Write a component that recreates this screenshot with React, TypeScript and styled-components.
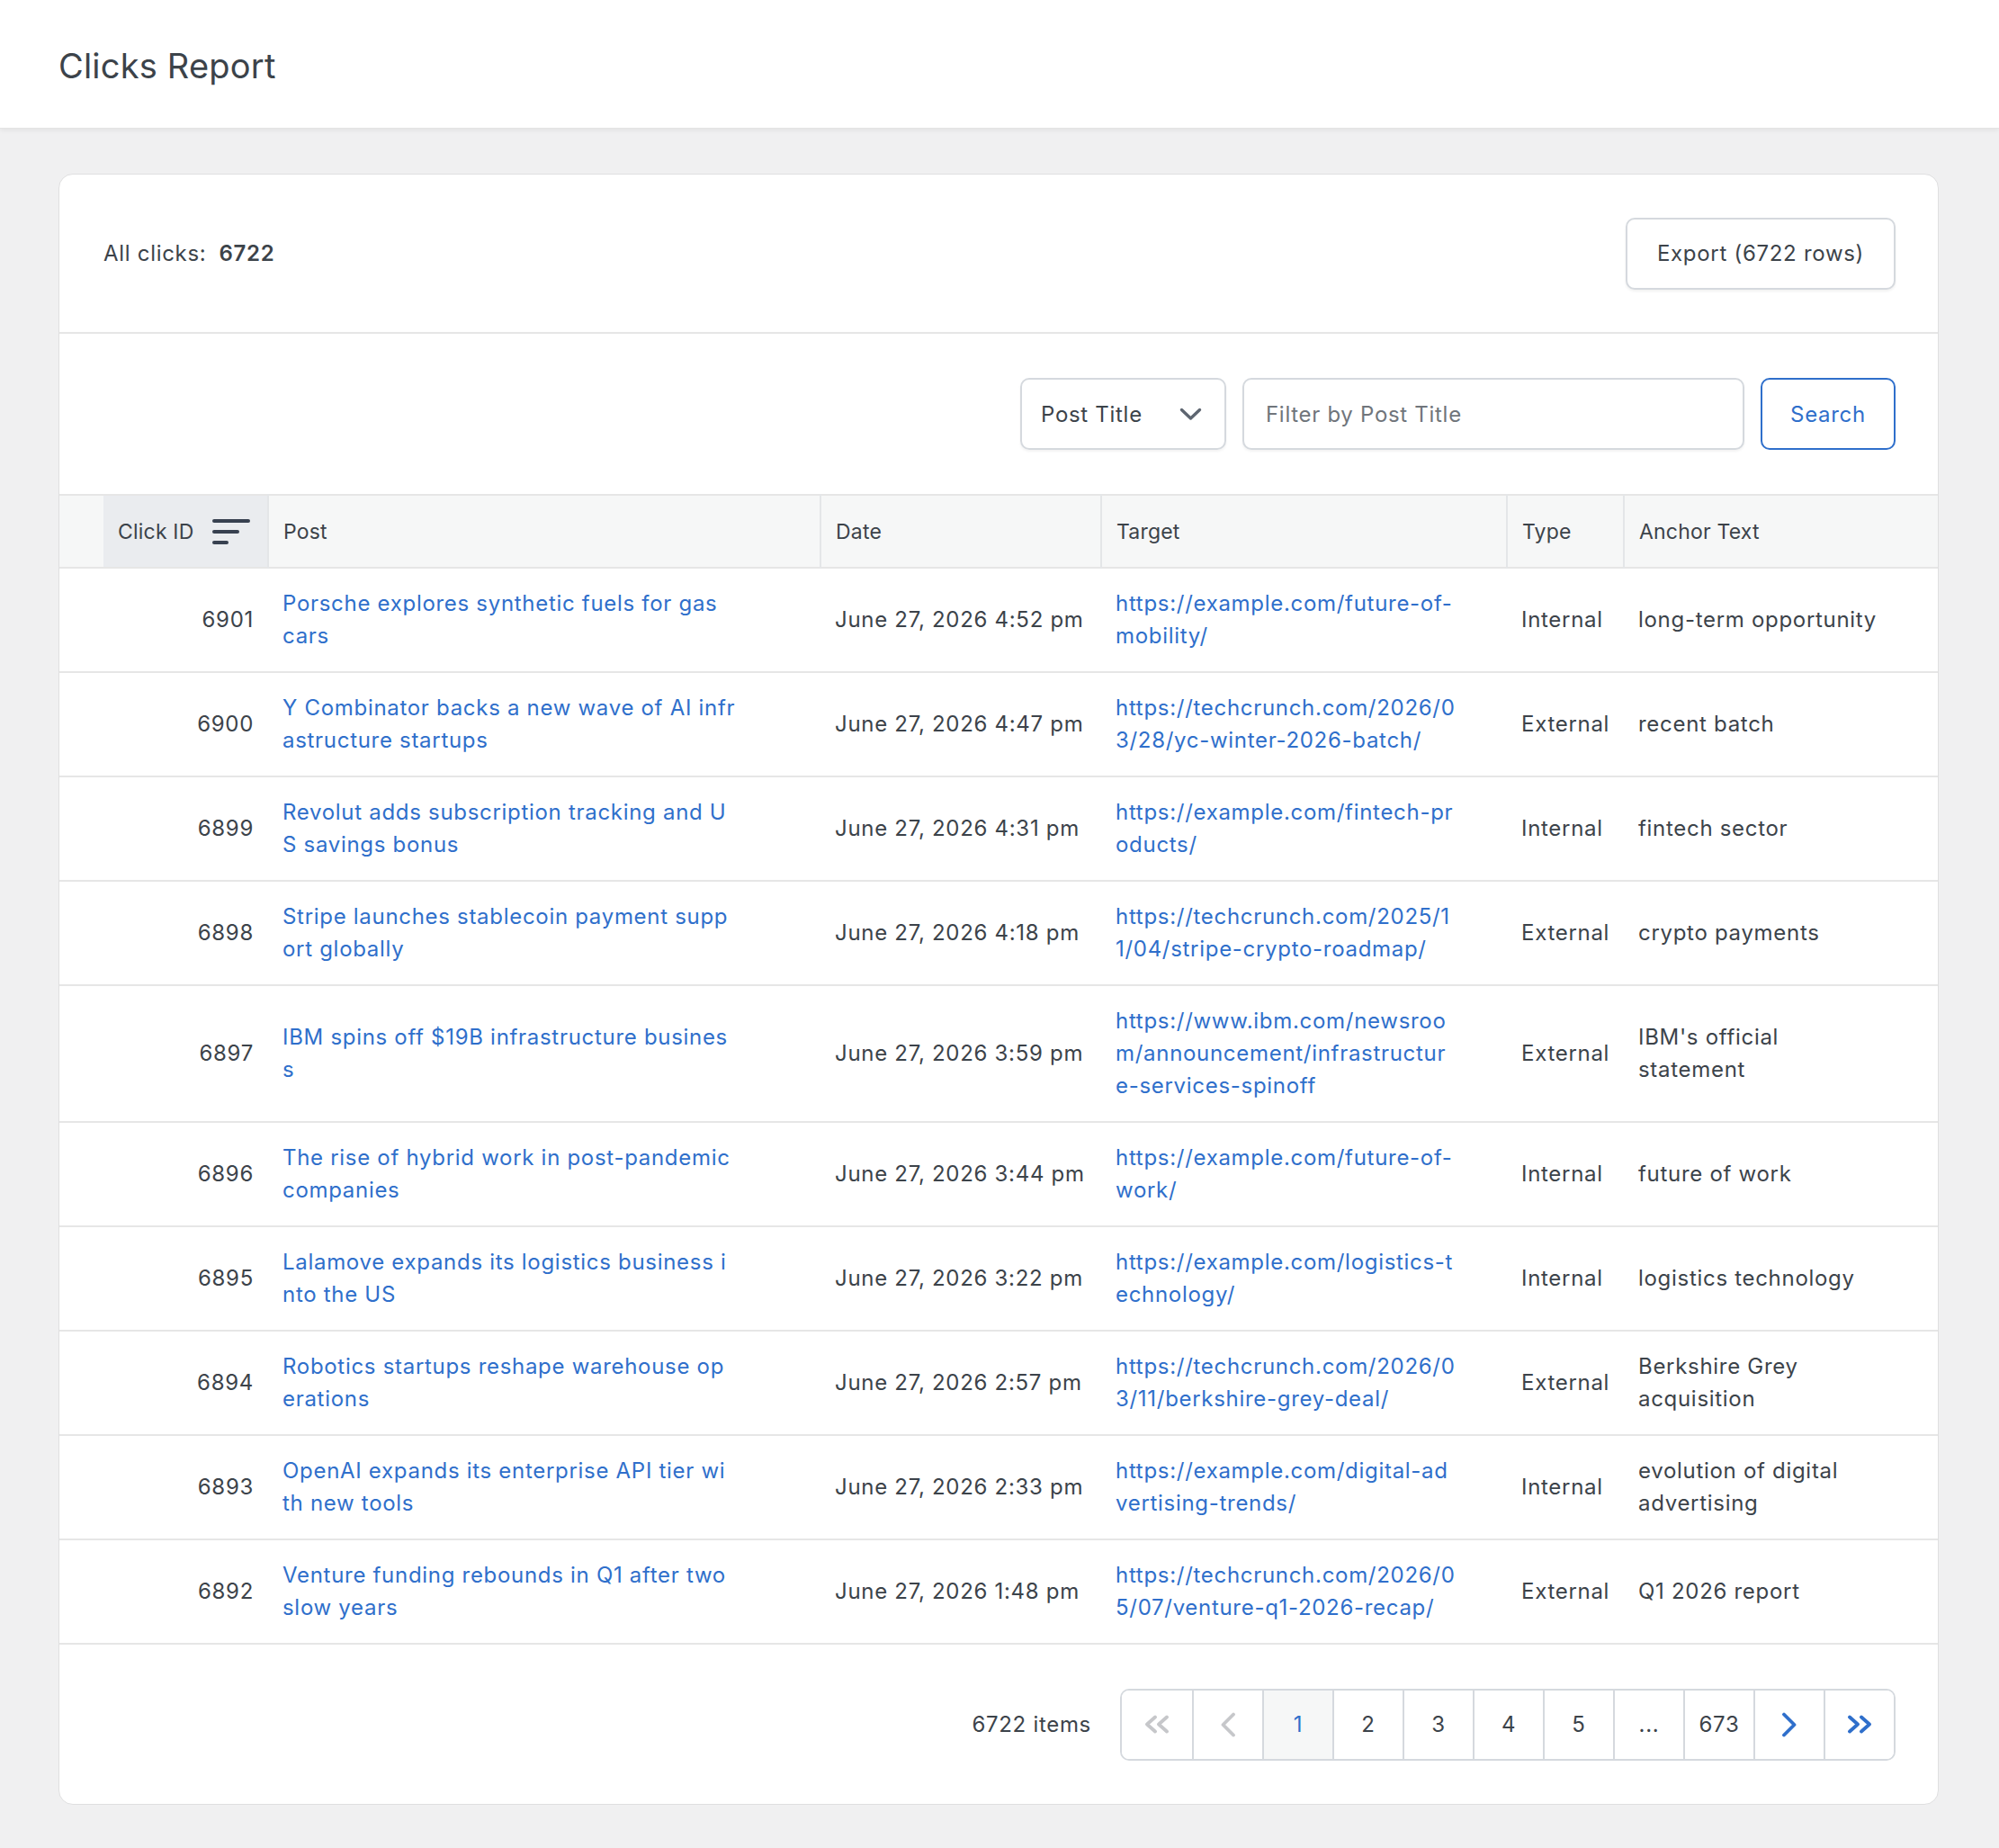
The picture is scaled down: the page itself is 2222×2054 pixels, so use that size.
import styled, { createGlobalStyle } from "styled-components";

const GlobalStyle = createGlobalStyle`
  * { box-sizing: border-box; }
  body {
    margin: 0;
    background: #f0f0f1;
    font-family: Inter, "Liberation Sans", sans-serif;
    font-size: 24px;
    letter-spacing: 0.7px;
    color: #3c434a;
  }
`;

const TopBar = styled.header`
  height: 143px;
  background: #fff;
  display: flex;
  align-items: center;
  padding-left: 65px;
  box-shadow: 0 2px 5px rgba(0, 0, 0, 0.06);
  border-bottom: 1px solid #e4e4e4;
`;

const Title = styled.h1`
  margin: 0 0 -3px;
  font-size: 38px;
  font-weight: 400;
  letter-spacing: 0.2px;
  color: #3c434a;
`;

const Main = styled.main`
  padding: 50px 67px 50px 65px;
`;

const Card = styled.section`
  background: #fff;
  border: 1px solid #dfdfe0;
  border-radius: 16px;
  overflow: hidden;
`;

const SummaryBar = styled.div`
  height: 177px;
  display: flex;
  align-items: center;
  justify-content: space-between;
  padding: 0 47px 0 49px;
  border-bottom: 2px solid #e6e6e6;
`;

const Count = styled.strong`
  font-weight: 600;
  margin-left: 14px;
`;

const Button = styled.button<{ $primary?: boolean; $w: number }>`
  width: ${(p) => p.$w}px;
  height: 80px;
  border-radius: 10px;
  background: #fff;
  font-family: inherit;
  font-size: 24px;
  letter-spacing: inherit;
  cursor: pointer;
  border: 2px solid ${(p) => (p.$primary ? "#2f6fcb" : "#d5d9de")};
  color: ${(p) => (p.$primary ? "#2f6fcb" : "#3c434a")};
  box-shadow: ${(p) => (p.$primary ? "none" : "0 2px 3px rgba(0,0,0,0.06)")};
`;

const FilterBar = styled.div`
  height: 178px;
  display: flex;
  align-items: center;
  justify-content: flex-end;
  gap: 18px;
  padding: 0 47px;
`;

const SelectBox = styled.div`
  width: 229px;
  height: 80px;
  border: 2px solid #d5d9de;
  border-radius: 10px;
  display: flex;
  align-items: center;
  justify-content: space-between;
  padding: 0 25px 0 21px;
  box-shadow: 0 2px 3px rgba(0, 0, 0, 0.05);
`;

const Input = styled.input`
  width: 558px;
  height: 80px;
  border: 2px solid #d5d9de;
  border-radius: 10px;
  padding: 0 24px;
  font-family: inherit;
  font-size: 24px;
  letter-spacing: inherit;
  color: #3c434a;
  box-shadow: 0 2px 3px rgba(0, 0, 0, 0.05);
  &::placeholder {
    color: #70757b;
  }
`;

const Table = styled.table`
  width: 100%;
  table-layout: fixed;
  border-collapse: collapse;
  line-height: 36px;
`;

const Col = styled.col<{ $w?: number }>`
  width: ${(p) => (p.$w ? `${p.$w}px` : "auto")};
`;

const HeadRow = styled.tr`
  background: #f6f7f7;
  border-top: 2px solid #e6e6e6;
  border-bottom: 2px solid #e6e6e6;
`;

const Th = styled.th<{ $sorted?: boolean; $divider?: boolean }>`
  height: 81px;
  padding: 0 16px;
  text-align: left;
  font-size: 23px;
  letter-spacing: 0.2px;
  font-weight: 400;
  background: ${(p) => (p.$sorted ? "#eaecef" : "transparent")};
  border-left: ${(p) => (p.$divider ? "2px solid #e4e6e8" : "none")};
`;

const SortLabel = styled.span`
  display: flex;
  align-items: center;
  gap: 20px;
`;

const Row = styled.tr`
  border-bottom: 2px solid #e6e6e6;
`;

const Td = styled.td<{ $right?: boolean }>`
  padding: 21px 16px;
  vertical-align: middle;
  text-align: ${(p) => (p.$right ? "right" : "left")};
  white-space: nowrap;
`;

const LinkText = styled.a`
  color: #2f6fcb;
  text-decoration: none;
`;

const Line = styled.span`
  display: block;
`;

const Footer = styled.div`
  height: 177px;
  display: flex;
  align-items: center;
  justify-content: flex-end;
  gap: 32px;
  padding: 0 47px;
`;

const Pager = styled.nav`
  display: flex;
  border: 2px solid #d5d9de;
  border-radius: 10px;
  overflow: hidden;
`;

const PageCell = styled.span<{ $active?: boolean }>`
  width: 78px;
  height: 76px;
  display: flex;
  align-items: center;
  justify-content: center;
  background: ${(p) => (p.$active ? "#f6f7f7" : "#fff")};
  color: ${(p) => (p.$active ? "#2f6fcb" : "#3c434a")};
  & + & {
    border-left: 2px solid #d5d9de;
  }
`;

const SortIcon = () => (
  <svg width="42" height="30" viewBox="0 0 42 30">
    <g stroke="#384150" strokeWidth="4" strokeLinecap="round">
      <line x1="2" y1="3" x2="40" y2="3" />
      <line x1="2" y1="15" x2="28" y2="15" />
      <line x1="2" y1="27" x2="16" y2="27" />
    </g>
  </svg>
);

const ChevronDown = () => (
  <svg width="25" height="15" viewBox="0 0 25 15">
    <path d="M2.5 2.5 L12.5 12 L22.5 2.5" fill="none" stroke="#5d6570" strokeWidth="3.4" strokeLinecap="round" strokeLinejoin="round" />
  </svg>
);

const Chevron = ({ dir, color }: { dir: "left" | "right"; color: string }) => (
  <svg width="18" height="28" viewBox="0 0 18 28">
    <path
      d={dir === "left" ? "M15 2.5 L3.5 14 L15 25.5" : "M3 2.5 L14.5 14 L3 25.5"}
      fill="none"
      stroke={color}
      strokeWidth="3.8"
      strokeLinecap="round"
      strokeLinejoin="round"
    />
  </svg>
);

const DoubleChevron = ({ dir, color }: { dir: "left" | "right"; color: string }) => (
  <svg width="30" height="21" viewBox="0 0 30 21">
    <path
      d={
        dir === "left"
          ? "M13 2.5 L4 10.5 L13 18.5 M26 2.5 L17 10.5 L26 18.5"
          : "M4 2.5 L13 10.5 L4 18.5 M17 2.5 L26 10.5 L17 18.5"
      }
      fill="none"
      stroke={color}
      strokeWidth="3.8"
      strokeLinecap="round"
      strokeLinejoin="round"
    />
  </svg>
);

type Click = {
  id: number;
  post: string[];
  time: string;
  target: string[];
  type: string;
  anchor: string[];
};

const clicks: Click[] = [
  { id: 6901, post: ["Porsche explores synthetic fuels for gas", "cars"], time: "4:52 pm", target: ["https://example.com/future-of-", "mobility/"], type: "Internal", anchor: ["long-term opportunity"] },
  { id: 6900, post: ["Y Combinator backs a new wave of AI infr", "astructure startups"], time: "4:47 pm", target: ["https://techcrunch.com/2026/0", "3/28/yc-winter-2026-batch/"], type: "External", anchor: ["recent batch"] },
  { id: 6899, post: ["Revolut adds subscription tracking and U", "S savings bonus"], time: "4:31 pm", target: ["https://example.com/fintech-pr", "oducts/"], type: "Internal", anchor: ["fintech sector"] },
  { id: 6898, post: ["Stripe launches stablecoin payment supp", "ort globally"], time: "4:18 pm", target: ["https://techcrunch.com/2025/1", "1/04/stripe-crypto-roadmap/"], type: "External", anchor: ["crypto payments"] },
  { id: 6897, post: ["IBM spins off $19B infrastructure busines", "s"], time: "3:59 pm", target: ["https://www.ibm.com/newsroo", "m/announcement/infrastructur", "e-services-spinoff"], type: "External", anchor: ["IBM's official", "statement"] },
  { id: 6896, post: ["The rise of hybrid work in post-pandemic", "companies"], time: "3:44 pm", target: ["https://example.com/future-of-", "work/"], type: "Internal", anchor: ["future of work"] },
  { id: 6895, post: ["Lalamove expands its logistics business i", "nto the US"], time: "3:22 pm", target: ["https://example.com/logistics-t", "echnology/"], type: "Internal", anchor: ["logistics technology"] },
  { id: 6894, post: ["Robotics startups reshape warehouse op", "erations"], time: "2:57 pm", target: ["https://techcrunch.com/2026/0", "3/11/berkshire-grey-deal/"], type: "External", anchor: ["Berkshire Grey", "acquisition"] },
  { id: 6893, post: ["OpenAI expands its enterprise API tier wi", "th new tools"], time: "2:33 pm", target: ["https://example.com/digital-ad", "vertising-trends/"], type: "Internal", anchor: ["evolution of digital", "advertising"] },
  { id: 6892, post: ["Venture funding rebounds in Q1 after two", "slow years"], time: "1:48 pm", target: ["https://techcrunch.com/2026/0", "5/07/venture-q1-2026-recap/"], type: "External", anchor: ["Q1 2026 report"] },
];

const Lines = ({ lines }: { lines: string[] }) => (
  <>
    {lines.map((l, i) => (
      <Line key={i}>{l}</Line>
    ))}
  </>
);

const BLUE = "#2f6fcb";
const GREY = "#c6c7ca";

const App = () => {
  return (
    <>
      <GlobalStyle />
      <TopBar>
        <Title>Clicks Report</Title>
      </TopBar>
      <Main>
        <Card>
          <SummaryBar>
            <span>
              All clicks:<Count>6722</Count>
            </span>
            <Button $w={300}>Export (6722 rows)</Button>
          </SummaryBar>
          <FilterBar>
            <SelectBox>
              <span>Post Title</span>
              <ChevronDown />
            </SelectBox>
            <Input placeholder="Filter by Post Title" />
            <Button $primary $w={150}>
              Search
            </Button>
          </FilterBar>
          <Table>
            <colgroup>
              <Col $w={49} />
              <Col $w={183} />
              <Col $w={614} />
              <Col $w={312} />
              <Col $w={451} />
              <Col $w={130} />
              <Col />
            </colgroup>
            <thead>
              <HeadRow>
                <Th />
                <Th $sorted>
                  <SortLabel>
                    Click ID <SortIcon />
                  </SortLabel>
                </Th>
                <Th $divider>Post</Th>
                <Th $divider>Date</Th>
                <Th $divider>Target</Th>
                <Th $divider>Type</Th>
                <Th $divider>Anchor Text</Th>
              </HeadRow>
            </thead>
            <tbody>
              {clicks.map((c) => (
                <Row key={c.id}>
                  <Td />
                  <Td $right>{c.id}</Td>
                  <Td>
                    <LinkText href="#">
                      <Lines lines={c.post} />
                    </LinkText>
                  </Td>
                  <Td>June 27, 2026 {c.time}</Td>
                  <Td>
                    <LinkText href="#">
                      <Lines lines={c.target} />
                    </LinkText>
                  </Td>
                  <Td>{c.type}</Td>
                  <Td>
                    <Lines lines={c.anchor} />
                  </Td>
                </Row>
              ))}
            </tbody>
          </Table>
          <Footer>
            <span>6722 items</span>
            <Pager>
              <PageCell>
                <DoubleChevron dir="left" color={GREY} />
              </PageCell>
              <PageCell>
                <Chevron dir="left" color={GREY} />
              </PageCell>
              <PageCell $active>1</PageCell>
              <PageCell>2</PageCell>
              <PageCell>3</PageCell>
              <PageCell>4</PageCell>
              <PageCell>5</PageCell>
              <PageCell>...</PageCell>
              <PageCell>673</PageCell>
              <PageCell>
                <Chevron dir="right" color={BLUE} />
              </PageCell>
              <PageCell>
                <DoubleChevron dir="right" color={BLUE} />
              </PageCell>
            </Pager>
          </Footer>
        </Card>
      </Main>
    </>
  );
};

export default App;
